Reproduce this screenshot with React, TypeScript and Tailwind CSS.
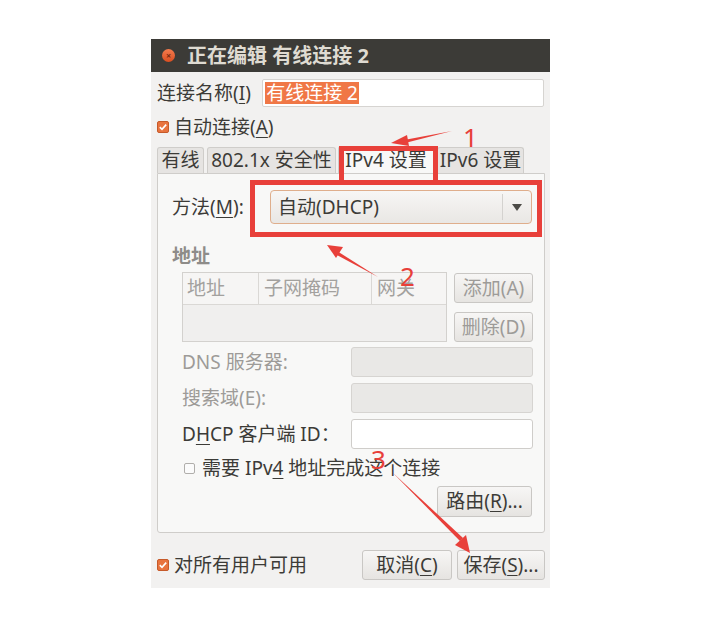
import React from 'react';

const font = { fontFamily: '"Noto Sans", "Noto Sans CJK SC", sans-serif' };

const U = ({ children }: { children: React.ReactNode }) => (
  <span className="underline underline-offset-[3px] decoration-1">{children}</span>
);

const CheckOn = () => (
  <svg width="12" height="12" viewBox="0 0 12 12" className="shrink-0">
    <rect x="0.5" y="0.5" width="11" height="11" rx="1.5" fill="#e8743f" stroke="#c65a2a" />
    <path d="M2.8 6.1 L5 8.3 L9.2 3.6" fill="none" stroke="#fff" strokeWidth="1.6" />
  </svg>
);

const CheckOff = () => (
  <svg width="11" height="11" viewBox="0 0 11 11" className="shrink-0">
    <rect x="0.5" y="0.5" width="10" height="10" rx="1.5" fill="#fbfbfb" stroke="#b0aeab" />
  </svg>
);

const Btn = ({ children, disabled, className = '' }: { children: React.ReactNode; disabled?: boolean; className?: string }) => (
  <div
    className={`flex items-center justify-center rounded-[3px] border border-[#c9c7c4] bg-gradient-to-b from-[#f7f6f5] to-[#e6e4e1] text-[19px] ${disabled ? 'text-[#9d9b98]' : 'text-[#3c3b37]'} ${className}`}
  >
    {children}
  </div>
);

/** IPv4 设置页面 — 编辑有线连接对话框 */
export default function App() {
  return (
    <div className="relative w-[720px] h-[622px] bg-white overflow-hidden" style={font}>
      <div className="absolute left-[151px] top-[39px] w-[399px] h-[549px] bg-[#f2f1f0] flex flex-col">
        {/* 标题栏 */}
        <div className="h-[33px] bg-[#3c3b37] flex items-center shrink-0">
          <div className="ml-[11px] w-[13px] h-[13px] rounded-full bg-gradient-to-b from-[#f47b4d] to-[#d94e20] flex items-center justify-center">
            <span className="text-[9px] leading-none text-[#7a2a10] font-bold">×</span>
          </div>
          <span className="ml-[12px] text-[20px] font-bold text-[#dfdbd2] leading-none">正在编辑 有线连接 2</span>
        </div>

        <div className="px-[6px] flex flex-col flex-1">
          {/* 连接名称 */}
          <div className="mt-[7px] h-[28px] flex items-center">
            <span className="text-[19px] text-[#3c3b37] w-[106px] whitespace-nowrap">连接名称(<U>I</U>)</span>
            <div className="w-[284px] h-[28px] bg-white border border-[#d6d4d1] rounded-[2px] flex items-center px-[2px]">
              <span className="bg-[#f07746] text-white text-[19px] leading-[22px] px-[1px]">有线连接 2</span>
            </div>
          </div>

          {/* 自动连接 */}
          <div className="mt-[9px] h-[22px] flex items-center gap-[5px]">
            <CheckOn />
            <span className="text-[19px] text-[#3c3b37]">自动连接(<U>A</U>)</span>
          </div>

          {/* 标签页 */}
          <div className="mt-[9px] h-[26px] flex items-end text-[19px] text-[#3c3b37] whitespace-nowrap">
            <div className="h-[26px] w-[47px] bg-[#e6e4e2] border border-b-0 border-[#cfcdca] rounded-t-[3px] flex items-center justify-center">有线</div>
            <div className="ml-[3px] h-[26px] w-[129px] bg-[#e6e4e2] border border-b-0 border-[#cfcdca] rounded-t-[3px] flex items-center justify-center">802.1x 安全性</div>
            <div className="ml-[2px] h-[27px] w-[96px] bg-[#f8f8f7] border border-b-0 border-[#cfcdca] rounded-t-[3px] flex items-center justify-center">IPv4 设置</div>
            <div className="ml-[3px] h-[26px] w-[87px] bg-[#e6e4e2] border border-b-0 border-[#cfcdca] rounded-t-[3px] flex items-center justify-center">IPv6 设置</div>
          </div>

          {/* 标签页内容 */}
          <div className="w-[388px] h-[360px] bg-[#f8f8f7] border border-[#cfcdca] rounded-b-[3px] pl-[14px] flex flex-col">
            <div className="mt-[16px] h-[34px] flex items-center">
              <span className="w-[98px] text-[19px] text-[#3c3b37] whitespace-nowrap">方法(<U>M</U>):</span>
              <div className="w-[262px] h-[34px] rounded-[4px] border border-[#dfae8c] bg-gradient-to-b from-[#f7f6f5] to-[#e9e7e4] flex items-center">
                <span className="ml-[7px] flex-1 text-[19px] text-[#3c3b37]">自动(DHCP)</span>
                <div className="w-px h-[26px] bg-[#d4d2cf]" />
                <svg width="28" height="14" viewBox="0 0 28 14">
                  <path d="M9 4 L19 4 L14 11 Z" fill="#4c4b47" />
                </svg>
              </div>
            </div>

            <div className="mt-[20px] h-[24px] flex items-center text-[19px] font-bold text-[#8e8c89]">地址</div>

            <div className="mt-[4px] ml-[10px] flex gap-[7px]">
              <div className="w-[265px] h-[70px] bg-[#f0efee] border border-[#d3d1ce] flex flex-col">
                <div className="h-[32px] flex border-b border-[#dad8d5] text-[19px] text-[#a3a19e] bg-[#f6f5f4]">
                  <div className="w-[76px] pl-[4px] flex items-center border-r border-[#dad8d5]">地址</div>
                  <div className="w-[113px] pl-[5px] flex items-center border-r border-[#dad8d5]">子网掩码</div>
                  <div className="flex-1 pl-[5px] flex items-center">网关</div>
                </div>
              </div>
              <div className="flex flex-col gap-[9px] pt-px">
                <Btn disabled className="w-[79px] h-[30px]">添加(A)</Btn>
                <Btn disabled className="w-[79px] h-[30px]">删除(D)</Btn>
              </div>
            </div>

            <div className="ml-[10px] mt-[5px] flex flex-col gap-[6px] text-[19px]">
              <div className="h-[30px] flex items-center">
                <span className="w-[169px] text-[#9d9b98]">DNS 服务器:</span>
                <div className="w-[182px] h-[30px] rounded-[3px] border border-[#d6d4d1] bg-[#e9e8e6]" />
              </div>
              <div className="h-[30px] flex items-center">
                <span className="w-[169px] text-[#9d9b98]">搜索域(E):</span>
                <div className="w-[182px] h-[30px] rounded-[3px] border border-[#d6d4d1] bg-[#e9e8e6]" />
              </div>
              <div className="h-[30px] flex items-center">
                <span className="w-[169px] text-[#3c3b37] whitespace-nowrap">D<U>H</U>CP 客户端 ID：</span>
                <div className="w-[182px] h-[30px] rounded-[3px] border border-[#cfcdca] bg-white" />
              </div>
            </div>

            <div className="ml-[12px] mt-[6px] h-[26px] flex items-center gap-[7px]">
              <CheckOff />
              <span className="text-[19px] text-[#3c3b37]">需要 IPv<U>4</U> 地址完成这个连接</span>
            </div>

            <div className="mt-[5px] flex justify-end pr-[12px]">
              <Btn className="w-[95px] h-[31px]">路由(<U>R</U>)...</Btn>
            </div>
          </div>

          {/* 底部 */}
          <div className="mt-[17px] flex items-center">
            <CheckOn />
            <span className="ml-[5px] text-[19px] text-[#3c3b37]">对所有用户可用</span>
            <div className="ml-auto flex gap-[5px] mr-[-1px]">
              <Btn className="w-[90px] h-[30px]">取消(<U>C</U>)</Btn>
              <Btn className="w-[88px] h-[30px]">保存(<U>S</U>)...</Btn>
            </div>
          </div>
        </div>
      </div>

      {/* 红色标注 */}
      <svg className="absolute inset-0 pointer-events-none" width="720" height="622" viewBox="0 0 720 622">
        <g fill="none" stroke="#e8403a" strokeWidth="5">
          <path d="M341.5 182 L341.5 148.5 L435.5 148.5 L435.5 182" />
          <rect x="252.5" y="182.5" width="287" height="52" />
        </g>
        <g fill="#e8403a">
          {/* arrow 1 */}
          <path d="M452 131 L404 140 L405 143 Z" />
          <path d="M391 143 L407 135 L409 146 Z" />
          {/* arrow 2 */}
          <path d="M378 277 L337 251 L335 254 Z" />
          <path d="M327 245 L343 247 L336 258 Z" />
          {/* arrow 3 */}
          <path d="M392 472 L460 541 L463 538 Z" />
          <path d="M470 553 L455 545 L466 535 Z" />
        </g>
        <g fill="#e8403a" style={font} fontSize="26">
          <text x="463" y="147">1</text>
          <text x="400" y="286">2</text>
          <text x="371" y="469">3</text>
        </g>
      </svg>
    </div>
  );
}
